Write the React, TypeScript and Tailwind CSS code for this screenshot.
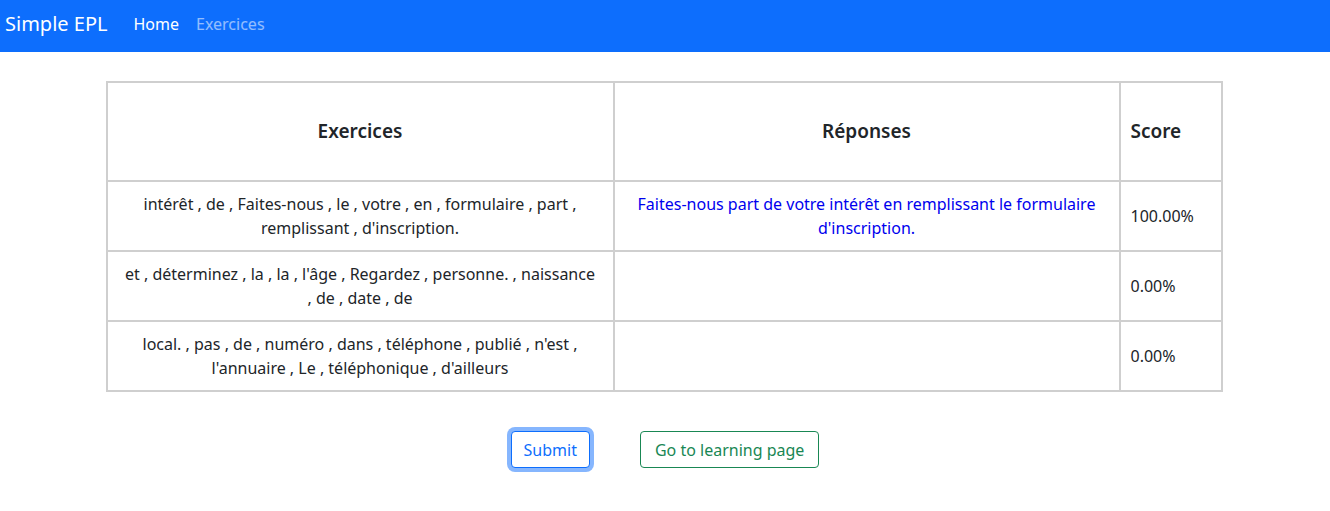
export default function App() {
  const rows = [
    {
      ex: "intérêt , de , Faites-nous , le , votre , en , formulaire , part , remplissant , d'inscription.",
      rep: "Faites-nous part de votre intérêt en remplissant le formulaire d'inscription.",
      score: "100.00%",
    },
    {
      ex: "et , déterminez , la , la , l'âge , Regardez , personne. , naissance , de , date , de",
      rep: "",
      score: "0.00%",
    },
    {
      ex: "local. , pas , de , numéro , dans , téléphone , publié , n'est , l'annuaire , Le , téléphonique , d'ailleurs",
      rep: "",
      score: "0.00%",
    },
  ];
  return (
    <div className="min-h-[511px] bg-white text-[#212529]" style={{ fontFamily: '"Noto Sans", "Open Sans", sans-serif' }}>
      <nav className="h-[52px] bg-[#0d6efd] flex items-center pl-[5px] pb-[5px]">
        <span className="text-white text-[20px] mr-[26px]">Simple EPL</span>
        <span className="text-white text-[16px] mr-[17px]">Home</span>
        <span className="text-white/55 text-[16px]">Exercices</span>
      </nav>
      <div className="pt-[29px] flex justify-center pr-[2px]">
        <table className="w-[1117px] border-separate border-spacing-0 border border-[#cfcfcf] text-[16px]">
          <thead>
            <tr className="h-[99px]">
              <th className="w-[507px] border border-[#cfcfcf] text-[19px] font-semibold text-center">Exercices</th>
              <th className="w-[506px] border border-[#cfcfcf] text-[19px] font-semibold text-center">Réponses</th>
              <th className="border border-[#cfcfcf] text-[19px] font-semibold text-left px-[10px]">Score</th>
            </tr>
          </thead>
          <tbody>
            {rows.map((r, i) => (
              <tr key={i} className="h-[70px]">
                <td className="border border-[#cfcfcf] text-center px-[14px] leading-[24px]">{r.ex}</td>
                <td className="border border-[#cfcfcf] text-center px-[14px] leading-[24px] text-[#0000ee]">{r.rep}</td>
                <td className="border border-[#cfcfcf] text-left px-[10px] text-[16px]">{r.score}</td>
              </tr>
            ))}
          </tbody>
        </table>
      </div>
      <div className="flex justify-center items-center gap-[50px] mt-[39px]">
        <button className="h-[37px] px-[12px] text-[16px] text-[#0d6efd] border border-[#0d6efd] rounded-[4px] bg-white ring-4 ring-[#0d6efd]/50">
          Submit
        </button>
        <button className="h-[37px] px-[14px] text-[16px] text-[#198754] border border-[#198754] rounded-[4px] bg-white">
          Go to learning page
        </button>
      </div>
    </div>
  );
}
